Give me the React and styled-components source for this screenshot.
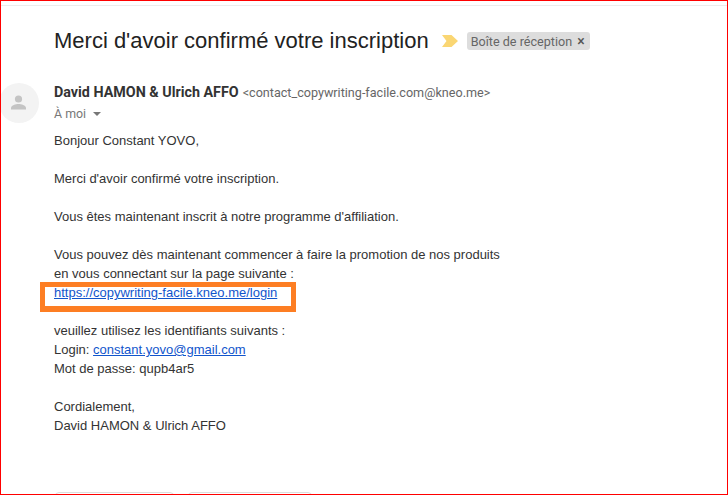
import React from 'react';
import styled, { createGlobalStyle } from 'styled-components';

const GlobalStyle = createGlobalStyle`
  html, body {
    margin: 0;
    padding: 0;
    background: #fff;
  }
`;

export default function App() {
  return (
    <>
      <GlobalStyle />
      <Page>
        <TopRule />
        <Subject>
          <Title>Merci d'avoir confirmé votre inscription</Title>
          <Marker viewBox="0 0 16 12">
            <path d="M0 0h9.5L16 6l-6.5 6H0l4.5-6z" fill="#fad673" />
          </Marker>
          <Label>
            Boîte de réception
            <LabelClose>×</LabelClose>
          </Label>
        </Subject>
        <Header>
          <Avatar>
            <svg width="18" height="18" viewBox="0 0 18 18">
              <circle cx="8.5" cy="5" r="3.6" fill="#c4c4c4" />
              <path d="M1 15.5v-1.6c0-2.7 5-4 7.5-4s7.5 1.3 7.5 4v1.6z" fill="#c4c4c4" />
            </svg>
          </Avatar>
          <Sender>
            <SenderLine>
              <SenderName>David HAMON &amp; Ulrich AFFO</SenderName>
              <SenderMail>&lt;contact_copywriting-facile.com@kneo.me&gt;</SenderMail>
            </SenderLine>
            <Recipient>
              À moi
              <Caret />
            </Recipient>
          </Sender>
        </Header>
        <Body>
          <Paragraph>Bonjour Constant YOVO,</Paragraph>
          <Paragraph>Merci d'avoir confirmé votre inscription.</Paragraph>
          <Paragraph>Vous êtes maintenant inscrit à notre programme d'affiliation.</Paragraph>
          <Paragraph>
            Vous pouvez dès maintenant commencer à faire la promotion de nos produits
            <br />
            en vous connectant sur la page suivante :
            <br />
            <Highlighted>
              <Link href="#">https://copywriting-facile.kneo.me/login</Link>
              <HighlightBox />
            </Highlighted>
          </Paragraph>
          <Paragraph>
            veuillez utilisez les identifiants suivants :
            <br />
            Login: <Link href="#">constant.yovo@gmail.com</Link>
            <br />
            Mot de passe: qupb4ar5
          </Paragraph>
          <Paragraph>
            Cordialement,
            <br />
            David HAMON &amp; Ulrich AFFO
          </Paragraph>
        </Body>
        <Actions>
          <ActionButton $width={119} />
          <ActionButton $width={124} />
        </Actions>
      </Page>
    </>
  );
}

const Page = styled.div`
  border: 1px solid #f00;
  box-sizing: border-box;
  height: 495px;
  overflow: hidden;
  width: 728px;
`;

const TopRule = styled.div`
  background: #ececec;
  height: 1px;
  margin-top: 4px;
`;

const Subject = styled.div`
  align-items: center;
  display: flex;
  height: 30px;
  margin-top: 20px;
  padding-left: 53px;
`;

const Title = styled.h1`
  color: #222;
  font-family: 'Liberation Sans', Arial, sans-serif;
  font-size: 22px;
  font-weight: 400;
  margin: 0;
  white-space: nowrap;
`;

const Marker = styled.svg`
  height: 12px;
  margin-left: 13px;
  width: 16px;
`;

const Label = styled.span`
  align-items: center;
  background: #dddddd;
  border-radius: 3px;
  color: #666;
  display: flex;
  font-family: Roboto, Arial, sans-serif;
  font-size: 12.6px;
  height: 18px;
  margin-left: 9px;
  padding: 0 5px 0 4px;
  white-space: nowrap;
`;

const LabelClose = styled.span`
  color: #555;
  font-size: 14px;
  font-weight: 500;
  margin-left: 5px;
`;

const Header = styled.div`
  display: flex;
  margin-top: 27px;
`;

const Avatar = styled.div`
  align-items: center;
  background: #f3f3f3;
  border-radius: 50%;
  display: flex;
  flex: none;
  height: 40px;
  justify-content: center;
  margin-left: -2px;
  width: 40px;
`;

const Sender = styled.div`
  margin-left: 15px;
  margin-top: -1px;
`;

const SenderLine = styled.div`
  align-items: baseline;
  display: flex;
  height: 21px;
  line-height: 20px;
`;

const SenderName = styled.span`
  color: #333;
  font-family: Roboto, Arial, sans-serif;
  font-size: 14.3px;
  font-weight: 700;
  white-space: nowrap;
`;

const SenderMail = styled.span`
  color: #666;
  font-family: Roboto, Arial, sans-serif;
  font-size: 12.6px;
  margin-left: 4px;
  white-space: nowrap;
`;

const Recipient = styled.div`
  align-items: center;
  color: #777;
  display: flex;
  font-family: Roboto, Arial, sans-serif;
  font-size: 12.4px;
  height: 21px;
`;

const Caret = styled.span`
  border-left: 4px solid transparent;
  border-right: 4px solid transparent;
  border-top: 4px solid #777;
  margin-left: 7px;
`;

const Body = styled.div`
  color: #333;
  font-family: 'Liberation Sans', Arial, sans-serif;
  font-size: 13px;
  line-height: 19px;
  margin-top: 7px;
  padding-left: 53px;
`;

const Paragraph = styled.p`
  margin: 0 0 19px;
`;

const Highlighted = styled.span`
  position: relative;
`;

const HighlightBox = styled.span`
  border-color: #fd7e23;
  border-style: solid;
  border-width: 5px 5px 6px;
  bottom: -12px;
  box-sizing: border-box;
  left: -14px;
  pointer-events: none;
  position: absolute;
  right: -19px;
  top: -3px;
`;

const Link = styled.a`
  color: #1155cc;
`;

const Actions = styled.div`
  display: flex;
  gap: 14px;
  margin-top: 57px;
  padding-left: 54px;
`;

const ActionButton = styled.div`
  border: 1px solid #ddd;
  border-radius: 4px;
  box-sizing: border-box;
  height: 36px;
  width: ${({ $width }) => $width}px;
`;
